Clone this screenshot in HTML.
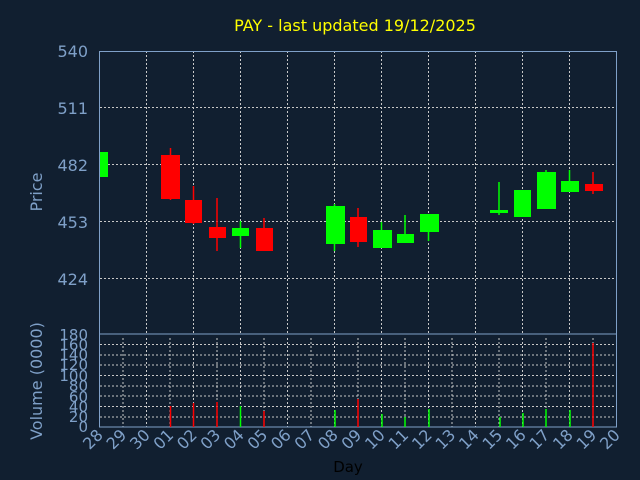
<!DOCTYPE html>
<html><head><meta charset="utf-8"><style>html,body{margin:0;padding:0;background:#111f30}svg{display:block}</style></head><body>
<svg width="640" height="480" xmlns="http://www.w3.org/2000/svg" font-family="DejaVu Sans, Liberation Sans, sans-serif">
<rect width="640" height="480" fill="#111f30"/>
<text x="355" y="31" fill="#ffff00" font-size="16" text-anchor="middle">PAY - last updated 19/12/2025</text>
<g stroke="#c8c8c8" stroke-width="1" stroke-dasharray="2,2" fill="none">
<path d="M146.5 51V334M193.5 51V334M240.5 51V334M287.5 51V334M334.5 51V334M381.5 51V334M428.5 51V334M475.5 51V334M522.5 51V334M569.5 51V334"/>
<path d="M100 107.5H617M100 164.5H617M100 221.5H617M100 278.5H617"/>
<path d="M123 338V427M146.5 338V427M170 338V427M193.5 338V427M217 338V427M240.5 338V427M264 338V427M287.5 338V427M311 338V427M334.5 338V427M358 338V427M381.5 338V427M405 338V427M428.5 338V427M452 338V427M475.5 338V427M499 338V427M522.5 338V427M546 338V427M569.5 338V427M593 338V427"/>
<path d="M100 417H617M100 406.5H617M100 396H617M100 386H617M100 375.5H617M100 365H617M100 355H617M100 344.5H617"/>
</g>
<g stroke="#7fa0c8" stroke-width="1" fill="none">
<rect x="99.5" y="51.5" width="517" height="282.5"/>
<rect x="99.5" y="334" width="517" height="93"/>
</g>
<g fill="#7fa0c8" font-size="16" text-anchor="end">
<text x="88" y="57">540</text><text x="88" y="114">511</text><text x="88" y="171">482</text><text x="88" y="228">453</text><text x="88" y="285">424</text>
</g>
<g fill="#7fa0c8" font-size="15" text-anchor="end">
<text x="88" y="340">180</text><text x="88" y="350">160</text><text x="88" y="360">140</text><text x="88" y="370">120</text><text x="88" y="381">100</text><text x="88" y="391">80</text><text x="88" y="402">60</text><text x="88" y="412">40</text><text x="88" y="422">20</text><text x="88" y="432">0</text>
</g>
<text transform="translate(42,192) rotate(-90)" fill="#7fa0c8" font-size="16" text-anchor="middle">Price</text>
<text transform="translate(42,381) rotate(-90)" fill="#7fa0c8" font-size="16" text-anchor="middle">Volume (0000)</text>
<text x="348" y="472" fill="#000" font-size="15" text-anchor="middle">Day</text>
<g fill="#7fa0c8" font-size="16" text-anchor="end">
<text transform="translate(104,436) rotate(-45)">28</text><text transform="translate(127.5,436) rotate(-45)">29</text><text transform="translate(151,436) rotate(-45)">30</text><text transform="translate(174.5,436) rotate(-45)">01</text><text transform="translate(198,436) rotate(-45)">02</text><text transform="translate(221.5,436) rotate(-45)">03</text><text transform="translate(245,436) rotate(-45)">04</text><text transform="translate(268.5,436) rotate(-45)">05</text><text transform="translate(292,436) rotate(-45)">06</text><text transform="translate(315.5,436) rotate(-45)">07</text><text transform="translate(339,436) rotate(-45)">08</text><text transform="translate(362.5,436) rotate(-45)">09</text><text transform="translate(386,436) rotate(-45)">10</text><text transform="translate(409.5,436) rotate(-45)">11</text><text transform="translate(433,436) rotate(-45)">12</text><text transform="translate(456.5,436) rotate(-45)">13</text><text transform="translate(480,436) rotate(-45)">14</text><text transform="translate(503.5,436) rotate(-45)">15</text><text transform="translate(527,436) rotate(-45)">16</text><text transform="translate(550.5,436) rotate(-45)">17</text><text transform="translate(574,436) rotate(-45)">18</text><text transform="translate(597.5,436) rotate(-45)">19</text><text transform="translate(621,436) rotate(-45)">20</text>
</g>
<g stroke-width="1.5">
<path stroke="#ff0000" d="M170.5 148V200M193.5 186V224M217 198V251M264 218V251M358 208V247M593 172V194"/>
<path stroke="#00ff00" d="M240.5 221V248M334.5 204V251M381.5 222V248M405 215V243M428.5 214V241M499 182V215M546 170V209M569.5 170V192"/>
</g>
<g fill="#ff0000">
<rect x="161" y="155" width="19" height="44"/><rect x="185" y="200" width="17" height="23"/><rect x="209" y="227" width="17" height="11"/><rect x="256" y="228" width="17" height="23"/><rect x="350" y="217" width="17" height="25"/><rect x="585" y="184" width="18" height="7"/>
</g>
<g fill="#00ff00">
<rect x="100" y="152" width="8" height="25"/><rect x="232" y="228" width="17" height="8"/><rect x="326" y="206" width="19" height="38"/><rect x="373" y="230" width="19" height="18"/><rect x="397" y="234" width="17" height="9"/><rect x="420" y="214" width="19" height="18"/><rect x="490" y="210" width="18" height="3"/><rect x="514" y="190" width="17" height="27"/><rect x="537" y="172" width="19" height="37"/><rect x="561" y="181" width="18" height="11"/>
</g>
<g stroke-width="1.5">
<path stroke="#ff0000" d="M170.5 406V427M193.5 403V427M217 402V427M264 411V427M358 399V427M593 343V427"/>
<path stroke="#00ff00" d="M240.5 406V427M335 410V427M382 414V427M405 417V427M429 409V427M500 417V427M523 413V427M546 409V427M570 410V427"/>
</g>
</svg>
</body></html>
